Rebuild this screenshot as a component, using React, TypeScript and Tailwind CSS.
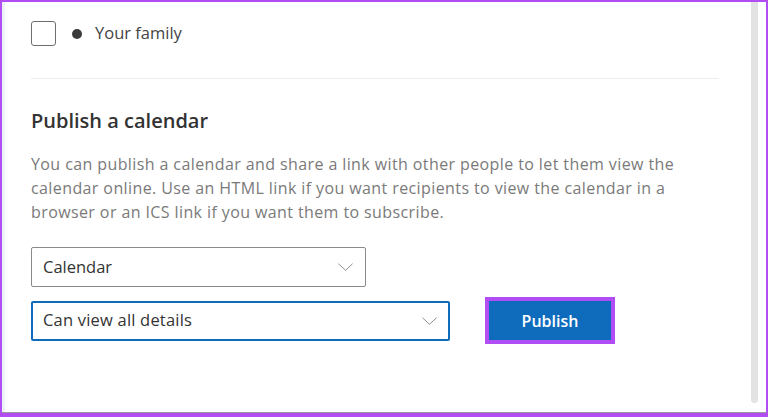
import React from "react";

const Chevron = ({ className }: { className?: string }) => (
  <svg
    viewBox="0 0 18 10"
    className={className}
    fill="none"
    stroke="#7d7d7d"
    strokeWidth="0.9"
  >
    <path d="M1.5 1.5 L9 8.5 L16.5 1.5" />
  </svg>
);

const App = () => {
  return (
    <div
      className="flex h-[417px] w-[768px] flex-col overflow-hidden bg-[#b14df5] pt-[2px] pl-[2px] pr-[2px]"
      style={{ fontFamily: '"Open Sans", "Noto Sans", sans-serif' }}
    >
      <div className="flex flex-1 bg-white">
        {/* left edge strip */}
        <div className="w-[3px] bg-[#eef2f6]" />

        {/* Content */}
        <div className="flex-1 pl-[26px] pr-[32px]">
          <div className="mt-[19px] flex items-center">
            <div className="h-[25px] w-[25px] rounded-[3px] border border-[#6e6e6e]" />
            <span className="ml-[16px] h-[10px] w-[10px] rounded-full bg-[#3b3b3b]" />
            <span className="ml-[13px] text-[16.5px] text-[#444444]">Your family</span>
          </div>

          <div className="mt-[32px] h-px bg-[#ededed]" />

          <h2 className="mt-[27px] text-[20px] font-semibold text-[#333333]">
            Publish a calendar
          </h2>

          <p className="mt-[16px] text-[16px] leading-[24px] tracking-[0.4px] text-[#7a7a7a]">
            <span className="block whitespace-nowrap">
              You can publish a calendar and share a link with other people to let them view the
            </span>
            <span className="block whitespace-nowrap">
              calendar online. Use an HTML link if you want recipients to view the calendar in a
            </span>
            <span className="block whitespace-nowrap">
              browser or an ICS link if you want them to subscribe.
            </span>
          </p>

          <div className="mt-[23px] flex h-[40px] w-[335px] items-center justify-between rounded-[2px] border border-[#8a8a8a] pl-[11px] pr-[11px]">
            <span className="text-[16.5px] text-[#333333]">Calendar</span>
            <Chevron className="h-[10px] w-[17px]" />
          </div>

          <div className="mt-[10px] flex items-center">
            <div className="flex h-[40px] w-[419px] items-center justify-between rounded-[2px] border-2 border-[#0f6cbd] pl-[10px] pr-[10px]">
              <span className="text-[16.5px] tracking-[0.2px] text-[#333333]">Can view all details</span>
              <Chevron className="h-[10px] w-[17px]" />
            </div>
            <div className="ml-[35px] border-[4px] border-[#b14df5]">
              <button className="flex h-[39px] w-[122px] items-center justify-center bg-[#0f6cbd] text-[16px] font-semibold text-white">
                Publish
              </button>
            </div>
          </div>
        </div>

        {/* Scrollbar */}
        <div className="mr-[8px] flex w-[7px] flex-col">
          <div className="h-[401px] rounded-b-full bg-[#e3e3e3]" />
        </div>
      </div>
      <div className="h-px bg-[#9a9a9a]" />
      <div className="h-[4px] bg-[#b14df5]" />
    </div>
  );
};

export default App;
